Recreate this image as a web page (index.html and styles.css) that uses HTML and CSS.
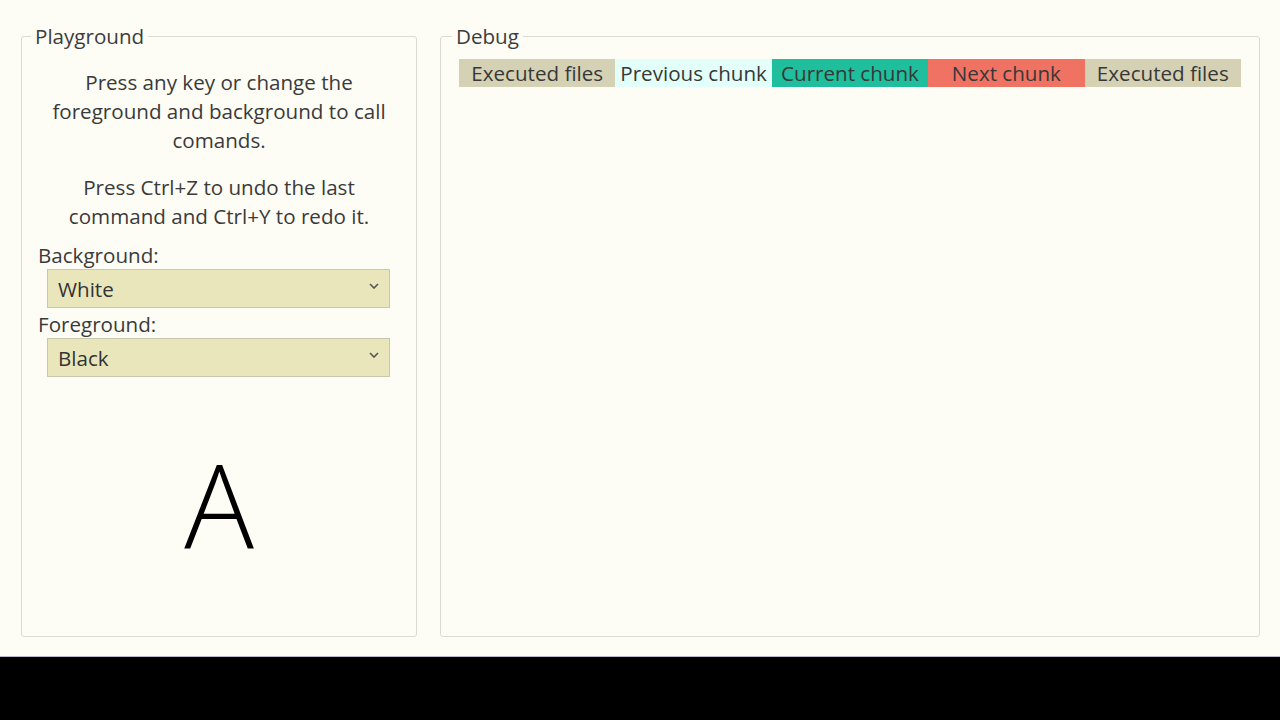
FILE: index.html
```html
<!DOCTYPE html>
<html>
<head>
<meta charset="utf-8">
<title>Command Playground</title>
<link rel="stylesheet" href="styles.css">
</head>
<body>
<div class="window">
  <div class="content">
    <fieldset class="group left">
      <legend>Playground</legend>
      <div class="body">
        <p class="info">Press any key or change the foreground and background to call comands.</p>
        <p class="info second">Press Ctrl+Z to undo the last command and Ctrl+Y to redo it.</p>
        <div class="field first">
          <div class="label">Background:</div>
          <div class="combo"><span>White</span><svg class="chev" width="10" height="6" viewBox="0 0 10 6"><path d="M1 1 L5 5 L9 1" fill="none" stroke="#555" stroke-width="1.6"/></svg></div>
        </div>
        <div class="field">
          <div class="label">Foreground:</div>
          <div class="combo"><span>Black</span><svg class="chev" width="10" height="6" viewBox="0 0 10 6"><path d="M1 1 L5 5 L9 1" fill="none" stroke="#555" stroke-width="1.6"/></svg></div>
        </div>
        <div class="preview">A</div>
      </div>
    </fieldset>
    <fieldset class="group right">
      <legend>Debug</legend>
      <div class="body">
        <div class="chunks">
          <div class="chunk executed">Executed files</div>
          <div class="chunk previous">Previous chunk</div>
          <div class="chunk current">Current chunk</div>
          <div class="chunk next">Next chunk</div>
          <div class="chunk executed">Executed files</div>
        </div>
      </div>
    </fieldset>
  </div>
  <div class="taskbar"></div>
</div>
</body>
</html>
```

FILE: styles.css
```css
html, body {
  margin: 0;
  padding: 0;
  width: 1280px;
  height: 720px;
  overflow: hidden;
  background: #000;
}
body {
  font-family: "Open Sans", "Noto Sans", "Liberation Sans", sans-serif;
  color: #3a3a3a;
}
.window {
  display: flex;
  flex-direction: column;
  width: 1280px;
  height: 720px;
}
.content {
  height: 656px;
  background: #fdfdf6;
  box-sizing: border-box;
  padding: 25px 20px 0 21px;
  display: flex;
  gap: 23px;
}
.taskbar {
  flex: 1;
  background: #000;
  border-top: 1px solid #b9b9c9;
}
.group {
  margin: 0;
  padding: 0;
  border: 1px solid #d9dbd0;
  border-radius: 3px;
  box-sizing: border-box;
  height: 612px;
  min-width: 0;
}
.group legend {
  font-size: 20.6px;
  padding: 0 4px;
  margin-left: 9px;
  line-height: 22px;
  color: #3c3c3c;
}
.right legend {
  margin-left: 11px;
}
.left {
  width: 396px;
}
.left .body {
  padding: 0 26px 0 16px;
  display: flex;
  flex-direction: column;
}
.right {
  flex: 1;
}
.right .body {
  padding: 12px 18px 0 18px;
}
.info {
  margin: 0;
  text-align: center;
  font-size: 20.6px;
  line-height: 29px;
  padding: 21px 0 0 10px;
}
.info.second {
  padding-top: 18px;
}
.field {
  display: flex;
  flex-direction: column;
}
.label {
  font-size: 20.6px;
  line-height: 27px;
  margin-top: 3px;
}
.field.first .label {
  margin-top: 11px;
}
.combo {
  margin-left: 9px;
  height: 39px;
  box-sizing: border-box;
  border: 1px solid #c9c7b0;
  background: #e9e6bc;
  display: flex;
  align-items: center;
  justify-content: space-between;
  padding: 0 10px 0 10px;
  font-size: 20.6px;
  color: #333;
}
.chev {
  margin-top: -6px;
}
.preview {
  text-align: center;
  font-size: 116px;
  line-height: 118px;
  font-weight: 300;
  color: #000;
  margin-top: 67px;
  padding-left: 10px;
}
.chunks {
  display: grid;
  grid-template-columns: repeat(5, 1fr);
  height: 28px;
}
.chunk {
  font-size: 20.6px;
  line-height: 28px;
  text-align: center;
  color: #383838;
  white-space: nowrap;
  overflow: hidden;
}
.executed { background: #d4d1b4; }
.previous { background: #e2fff9; }
.current { background: #1fbf9d; }
.next { background: #ef7263; }
```
